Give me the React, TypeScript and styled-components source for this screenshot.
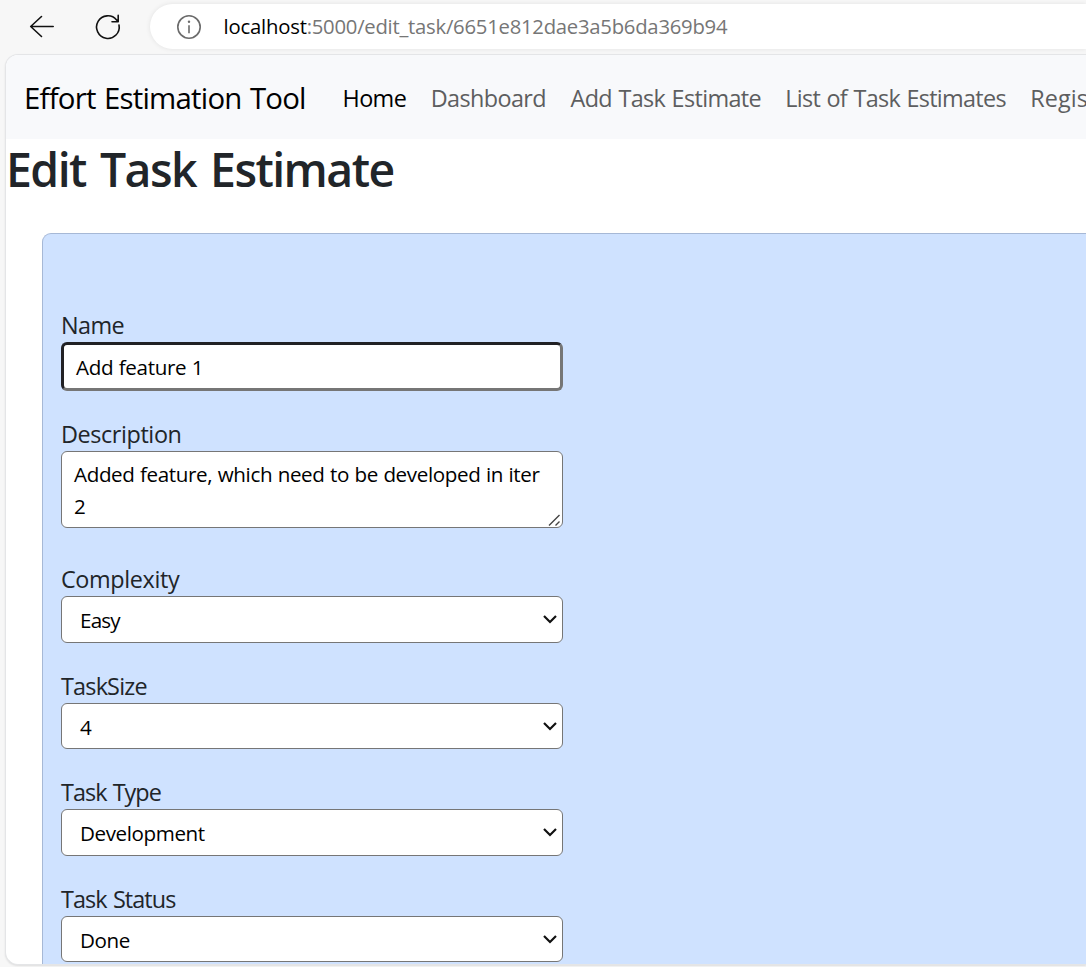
import React from 'react';
import styled, { createGlobalStyle } from 'styled-components';

const GlobalStyle = createGlobalStyle`
  * { box-sizing: border-box; }
  html, body { margin: 0; padding: 0; overflow: hidden; background: #f7f7f7; }
  body { font-family: "Open Sans", "Noto Sans", sans-serif; }
`;

const Browser = styled.div`
  display: flex;
  flex-direction: column;
  width: 100%;
  height: 967px;
  overflow: hidden;
  background: #f7f7f7;
`;

const Toolbar = styled.header`
  display: flex;
  flex: none;
  height: 54px;
  padding: 4px 0 5px 28px;
`;

const ToolButton = styled.span<{ $gap: number }>`
  display: flex;
  align-items: center;
  width: 28px;
  margin-right: ${(p) => p.$gap}px;
`;

const AddressBar = styled.div`
  display: flex;
  align-items: center;
  flex: 1;
  height: 45px;
  padding-left: 26px;
  border-radius: 23px 0 0 23px;
  background: #fff;
  box-shadow: 0 0 5px rgba(0, 0, 0, 0.09);
`;

const Text = styled.span<{ $track?: number }>`
  white-space: nowrap;
  letter-spacing: ${(p) => p.$track ?? 0}px;
`;

const Url = styled.div`
  display: flex;
  margin-left: 21.5px;
  padding-bottom: 2px;
  font-size: 20.3px;
  line-height: 28px;
  color: #767676;
`;

const Host = styled(Text)`
  color: #000;
`;

const Viewport = styled.main`
  display: flex;
  flex-direction: column;
  flex: none;
  height: 911px;
  margin-left: 5px;
  border: 1px solid #e4e5e7;
  border-right: 0;
  border-radius: 13px 0 0 13px;
  background: #fff;
  overflow: hidden;
  box-shadow: 0 1px 2px rgba(0, 0, 0, 0.1);
`;

const Navbar = styled.nav`
  display: flex;
  align-items: center;
  flex: none;
  height: 84px;
  padding: 2px 0 0 18px;
  background: #f8f9fb;
`;

const Brand = styled(Text)`
  width: 318.5px;
  flex: none;
  font-size: 29.4px;
  line-height: 44px;
  word-spacing: 1.5px;
  color: #000;
`;

const NavLink = styled(Text)<{ $width: number; $active?: boolean }>`
  flex: none;
  width: ${(p) => p.$width}px;
  font-size: 23.4px;
  line-height: 36px;
  word-spacing: 1px;
  color: ${(p) => (p.$active ? '#000' : '#5d5e5f')};
`;

const Heading = styled.h1`
  flex: none;
  margin: 0;
  padding: 1px 0 0 0;
  height: 94px;
  font-size: 46.4px;
  font-weight: 600;
  line-height: 58px;
  word-spacing: 3.5px;
  color: #212529;
`;

const Card = styled.section`
  flex: 1;
  margin-left: 36px;
  padding: 74px 0 0 18px;
  border: 1px solid #a6b8d6;
  border-right: 0;
  border-bottom: 0;
  border-radius: 9px 0 0 0;
  background: #cfe2ff;
`;

const Field = styled.div<{ $after: number }>`
  width: 502px;
  margin-bottom: ${(p) => p.$after}px;
`;

const Label = styled.div`
  height: 34px;
  font-size: 23.4px;
  line-height: 34px;
  word-spacing: 1px;
  color: #212529;
`;

const Control = styled.div<{ $height: number }>`
  display: flex;
  align-items: center;
  height: ${(p) => p.$height}px;
  border: 1px solid #767676;
  border-radius: 6px;
  background: #fff;
  font-size: 20.6px;
  line-height: 32px;
  word-spacing: 0.5px;
  color: #000;
`;

const InsetInput = styled(Control)`
  padding: 1px 0 0 12px;
  border-width: 3px;
  border-color: #212124 #767676 #767676 #212124;
`;

const TextArea = styled(Control)`
  position: relative;
  align-items: flex-start;
  flex-direction: column;
  padding: 6px 0 0 12px;
`;

const Grip = styled.svg`
  position: absolute;
  right: 0;
  bottom: 0;
`;

const Select = styled(Control)`
  justify-content: space-between;
  padding: 1px 5px 0 18px;
`;

const Chevron = styled.svg`
  margin-bottom: 2px;
`;

const links = [
  { text: 'Home', width: 88.2, track: -0.6, active: true },
  { text: 'Dashboard', width: 139.8, track: -0.6 },
  { text: 'Add Task Estimate', width: 214.7, track: -0.64 },
  { text: 'List of Task Estimates', width: 245, track: -0.68 },
  { text: 'Register', width: 120, track: 0.1 },
];

const selects = [
  { label: 'Complexity', value: 'Easy', height: 47, track: -0.37, valueTrack: -0.8 },
  { label: 'TaskSize', value: '4', height: 46, track: -0.8, valueTrack: 0 },
  { label: 'Task Type', value: 'Development', height: 47, track: -0.95, valueTrack: -0.4 },
  { label: 'Task Status', value: 'Done', height: 46, track: -0.9, valueTrack: -0.4 },
];

export default function App() {
  return (
    <Browser>
      <GlobalStyle />
      <Toolbar>
        <ToolButton $gap={38}>
          <svg width="28" height="26" viewBox="0 0 28 26" fill="none" stroke="#111" strokeWidth="1.6" strokeLinecap="round" strokeLinejoin="round">
            <path d="M13.500 2.500 2.700 12.500l10.800 10M2.700 12.500h22.500" />
          </svg>
        </ToolButton>
        <ToolButton $gap={28}>
          <svg width="28" height="28" viewBox="0 0 28 28" fill="none" stroke="#111" strokeWidth="1.6" strokeLinecap="round" strokeLinejoin="round">
            <path d="M25 12A11.300 11.300 0 1 1 22.600 6.900L24 8.500M24.200 2.400v6.300h-6.200" />
          </svg>
        </ToolButton>
        <AddressBar>
          <svg width="26" height="26" viewBox="0 0 26 26" fill="none" stroke="#6b6b6b" strokeWidth="1.6">
            <circle cx="13" cy="13" r="11.200" />
            <path d="M13 11.200v8" />
            <circle cx="13" cy="7.800" r="1.200" fill="#6b6b6b" stroke="none" />
          </svg>
          <Url>
            <Host $track={-0.2}>localhost</Host>
            <Text $track={-0.25}>:5000/edit_task/6651e812dae3a5b6da369b94</Text>
          </Url>
        </AddressBar>
      </Toolbar>
      <Viewport>
        <Navbar>
          <Brand $track={-0.78}>Effort Estimation Tool</Brand>
          {links.map((l) => (
            <NavLink key={l.text} $width={l.width} $track={l.track} $active={l.active}>{l.text}</NavLink>
          ))}
        </Navbar>
        <Heading><Text $track={-1.54}>Edit Task Estimate</Text></Heading>
        <Card>
          <Field $after={26}>
            <Label><Text $track={-0.55}>Name</Text></Label>
            <InsetInput $height={49}><Text $track={-0.33}>Add feature 1</Text></InsetInput>
          </Field>
          <Field $after={34}>
            <Label><Text $track={-0.4}>Description</Text></Label>
            <TextArea $height={77}>
              <Text $track={-0.37}>Added feature, which need to be developed in iter</Text>
              <Text>2</Text>
              <Grip width="14" height="14" viewBox="0 0 14 14" stroke="#444" strokeWidth="1.4">
                <path d="M1 12.500 11.500 2M7.500 12.500l4-4" />
              </Grip>
            </TextArea>
          </Field>
          {selects.map((s) => (
            <Field key={s.label} $after={26}>
              <Label><Text $track={s.track}>{s.label}</Text></Label>
              <Select $height={s.height}>
                <Text $track={s.valueTrack}>{s.value}</Text>
                <Chevron width="14" height="10" viewBox="0 0 14 10" fill="none" stroke="#111" strokeWidth="2.200">
                  <path d="M1 2 7 8l6-6" />
                </Chevron>
              </Select>
            </Field>
          ))}
        </Card>
      </Viewport>
    </Browser>
  );
}
